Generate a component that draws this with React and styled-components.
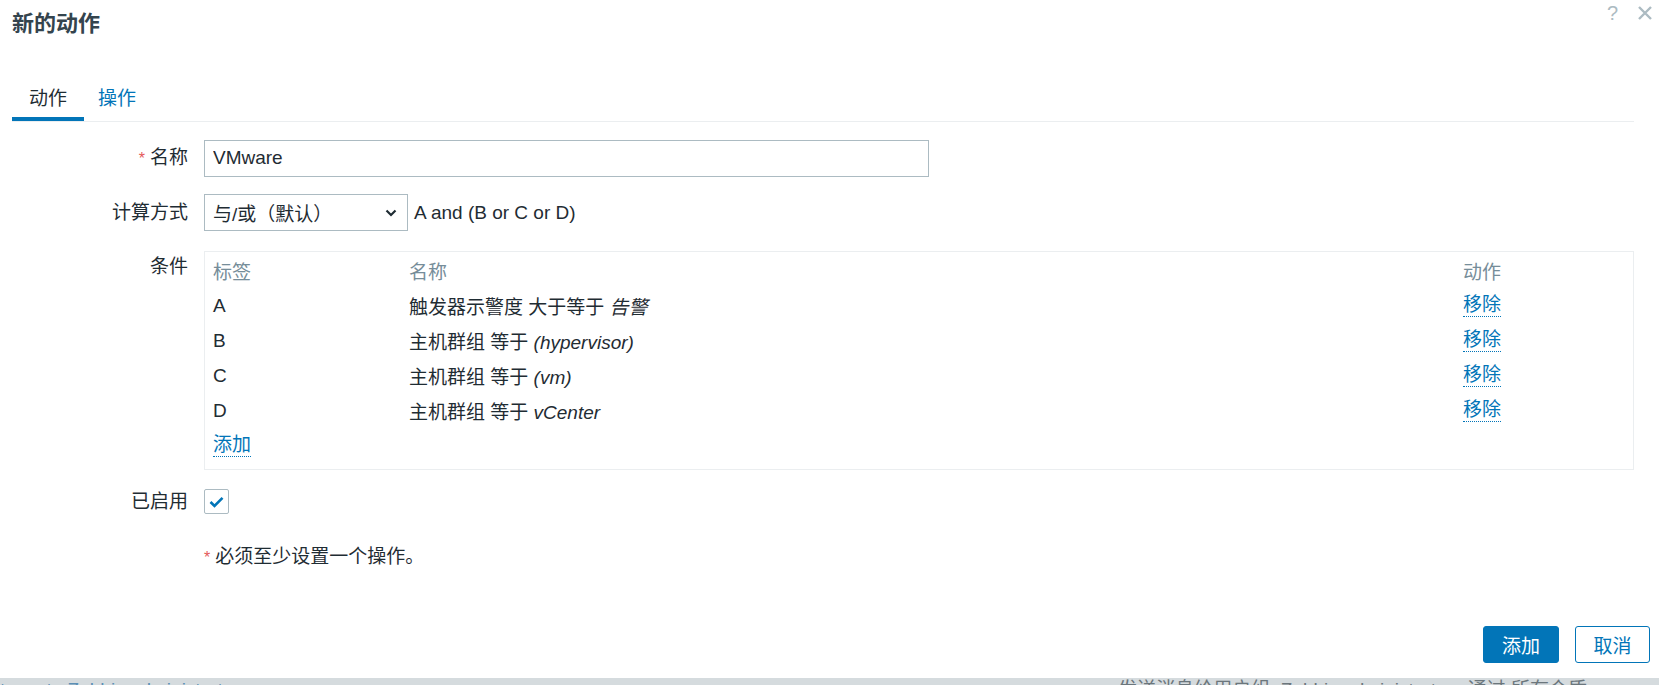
import React, { useState } from "react";
import styled, { createGlobalStyle } from "styled-components";

const GlobalStyle = createGlobalStyle`
  html, body {
    margin: 0;
    padding: 0;
    background: #fff;
  }
  body {
    font-family: "Liberation Sans", Arial, "Noto Sans CJK SC", sans-serif;
    font-size: 19px;
    color: #1f2c33;
    overflow: hidden;
  }
`;

const Page = styled.div`
  width: 1659px;
  height: 685px;
  display: flex;
  flex-direction: column;
  overflow: hidden;
`;

const Dialog = styled.div`
  height: 678px;
  display: flex;
  flex-direction: column;
  background: #fff;
`;

const Header = styled.div`
  height: 48px;
  display: flex;
  justify-content: space-between;
  padding: 0 6px 0 12px;
`;

const Title = styled.h4`
  margin: 0;
  font-size: 22px;
  font-weight: bold;
  line-height: 48px;
  color: #34444e;
`;

const HeaderIcons = styled.div`
  display: flex;
  gap: 19px;
  align-items: center;
  height: 26px;
  color: #acbbc2;
`;

const HelpMark = styled.span`
  font-size: 20px;
  line-height: 1;
`;

const Tabs = styled.div`
  display: flex;
  margin: 32px 25px 0 12px;
  border-bottom: 1px solid #ebeef0;
`;

const Tab = styled.div`
  height: 37px;
  padding: 0 17px;
  line-height: 37px;
  border-bottom: 4px solid ${(p) => (p.$active ? "#0275b8" : "transparent")};
  color: ${(p) => (p.$active ? "#1f2c33" : "#0275b8")};
  cursor: pointer;
  &:nth-child(2) {
    padding: 0 15px 0 14px;
  }
`;

const Form = styled.div`
  display: flex;
  flex-direction: column;
  margin: 17px 25px 0 0;
  flex: 1;
`;

const Row = styled.div`
  display: flex;
  align-items: ${(p) => (p.$top ? "flex-start" : "center")};
  gap: 16px;
  margin-bottom: ${(p) => p.$gap || 0}px;
`;

const Label = styled.label`
  width: 188px;
  flex-shrink: 0;
  text-align: right;
  line-height: ${(p) => p.$lh || 37}px;
`;

const Required = styled.span`
  color: #e45959;
  font-size: 16px;
  margin-right: 5px;
`;

const TextInput = styled.input`
  width: 725px;
  height: 37px;
  box-sizing: border-box;
  border: 1px solid #acbbc2;
  padding: 0 8px;
  font: inherit;
  color: #1f2c33;
  outline: none;
`;

const Select = styled.div`
  width: 204px;
  height: 37px;
  box-sizing: border-box;
  border: 1px solid #acbbc2;
  padding: 0 10px 0 8px;
  display: flex;
  align-items: center;
  justify-content: space-between;
`;

const Formula = styled.span`
  margin-left: -10px;
`;

const ConditionsBox = styled.div`
  flex: 1;
  border: 1px solid #ebeef0;
  padding: 1px 9px 6px 8px;
`;

const CondRow = styled.div`
  display: grid;
  grid-template-columns: 196px 1054px 1fr;
  height: 35px;
  align-items: center;
  color: ${(p) => (p.$head ? "#768d99" : "#1f2c33")};
`;

const Em = styled.em`
  font-style: italic;
`;

const Link = styled.span`
  color: #0275b8;
  border-bottom: 1px dotted #0275b8;
  line-height: 22px;
  justify-self: start;
  cursor: pointer;
`;

const Checkbox = styled.div`
  width: 25px;
  height: 25px;
  box-sizing: border-box;
  border: 1px solid #acbbc2;
  border-radius: 2px;
  display: flex;
  align-items: center;
  justify-content: center;
`;

const Note = styled.div`
  margin: 26px 0 0 204px;
  line-height: 22px;
`;

const Footer = styled.div`
  display: flex;
  justify-content: flex-end;
  gap: 16px;
  padding: 0 9px 15px 0;
`;

const Button = styled.button`
  width: ${(p) => p.$w}px;
  height: 37px;
  border-radius: 3px;
  font: inherit;
  cursor: pointer;
  border: 1px solid #0275b8;
  background: ${(p) => (p.$alt ? "#fff" : "#0275b8")};
  color: ${(p) => (p.$alt ? "#0275b8" : "#fff")};
`;

const Backdrop = styled.div`
  height: 7px;
  background: #d5dbde;
  overflow: hidden;
  display: flex;
  justify-content: space-between;
  font-size: 19px;
  line-height: 22px;
`;

const BackText = styled.span`
  margin-top: 1px;
  color: ${(p) => p.$c};
  margin-right: ${(p) => p.$mr || 0}px;
  white-space: nowrap;
`;

const conditions = [
  { tag: "A", name: "触发器示警度 大于等于 ", val: "告警" },
  { tag: "B", name: "主机群组 等于 ", val: "(hypervisor)" },
  { tag: "C", name: "主机群组 等于 ", val: "(vm)" },
  { tag: "D", name: "主机群组 等于 ", val: "vCenter" },
];

export default function App() {
  const [tab, setTab] = useState("action");

  return (
    <Page>
      <GlobalStyle />
      <Dialog>
        <Header>
          <Title>新的动作</Title>
          <HeaderIcons>
            <HelpMark>?</HelpMark>
            <svg width="16" height="16" viewBox="0 0 16 16">
              <path d="M2 2 L14 14 M14 2 L2 14" stroke="#acbbc2" strokeWidth="2.4" fill="none" />
            </svg>
          </HeaderIcons>
        </Header>

        <Tabs>
          <Tab $active={tab === "action"} onClick={() => setTab("action")}>动作</Tab>
          <Tab $active={tab === "ops"} onClick={() => setTab("ops")}>操作</Tab>
        </Tabs>

        <Form>
          <Row $gap={17}>
            <Label><Required>*</Required>名称</Label>
            <TextInput defaultValue="VMware" />
          </Row>
          <Row $gap={20}>
            <Label>计算方式</Label>
            <Select>
              <span>与/或（默认）</span>
              <svg width="12" height="8" viewBox="0 0 12 8">
                <path d="M1.5 1.5 L6 6 L10.5 1.5" stroke="#1f2c33" strokeWidth="2.2" fill="none" />
              </svg>
            </Select>
            <Formula>A and (B or C or D)</Formula>
          </Row>
          <Row $top $gap={13}>
            <Label $lh={32}>条件</Label>
            <ConditionsBox>
              <CondRow $head>
                <span>标签</span>
                <span>名称</span>
                <span>动作</span>
              </CondRow>
              {conditions.map((c) => (
                <CondRow key={c.tag}>
                  <span>{c.tag}</span>
                  <span>
                    {c.name}
                    <Em>{c.val}</Em>
                  </span>
                  <Link>移除</Link>
                </CondRow>
              ))}
              <CondRow>
                <Link>添加</Link>
              </CondRow>
            </ConditionsBox>
          </Row>
          <Row>
            <Label>已启用</Label>
            <Checkbox>
              <svg width="15" height="12" viewBox="0 0 15 12">
                <path d="M1.5 6 L5.5 10 L13.5 1.8" stroke="#0275b8" strokeWidth="2.6" fill="none" />
              </svg>
            </Checkbox>
          </Row>
          <Note>
            <Required>*</Required>必须至少设置一个操作。
          </Note>
        </Form>

        <Footer>
          <Button $w={76}>添加</Button>
          <Button $w={75} $alt>取消</Button>
        </Footer>
      </Dialog>
      <Backdrop>
        <BackText $c="#5b8fb5">tems to Zabbix administrators</BackText>
        <BackText $c="#6b767c" $mr={72}>
          发送消息给用户组: Zabbix administrators 通过 所有介质
        </BackText>
      </Backdrop>
    </Page>
  );
}
